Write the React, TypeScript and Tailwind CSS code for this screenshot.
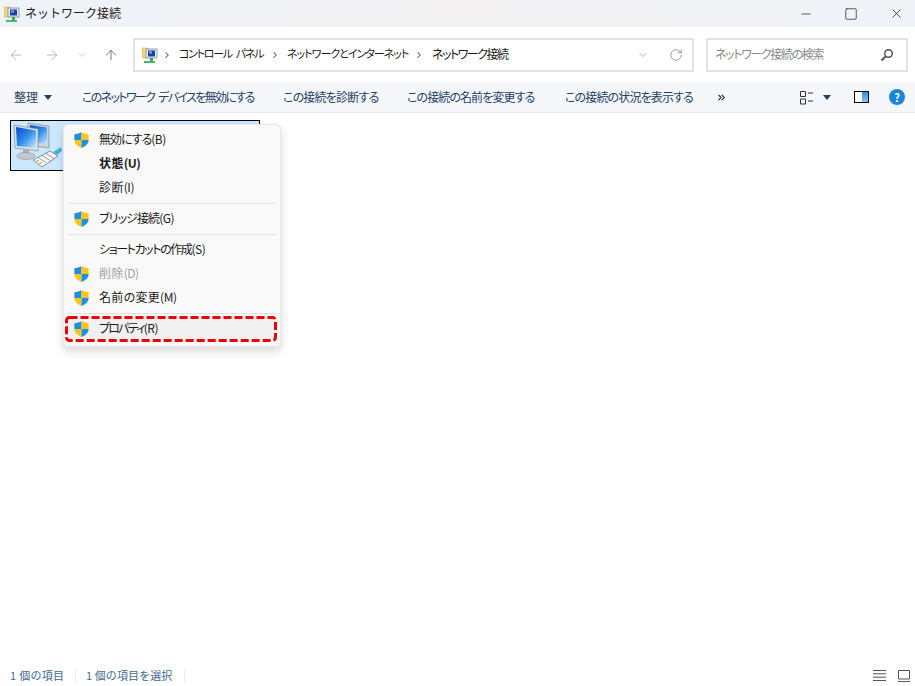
import { ArrowLeft, ArrowRight, ArrowUp, ChevronDown, ChevronRight, ChevronsRight, Minus, RotateCw, Square, X } from 'lucide-react';

const font = 'font-["Noto_Sans_CJK_JP","Liberation_Sans",sans-serif]';
const palt = '[font-feature-settings:"palt"]';

function FolderNetIcon() {
  return (
    <svg width="16" height="16" viewBox="0 0 16 16">
      <path d="M0 1h6l1 1v9H0z" fill="#f3d675" stroke="#c9a63c" strokeWidth="0.5" />
      <rect x="4" y="2" width="11" height="9" fill="#e8ecf4" stroke="#6f7f9c" strokeWidth="0.7" />
      <rect x="6" y="3.5" width="7" height="6" fill="#1c3fa8" />
      <rect x="7" y="4.5" width="3" height="2" fill="#7fb0ee" />
      <rect x="8" y="11" width="3" height="3" fill="#35a853" />
      <rect x="2" y="14" width="11" height="2" fill="#46b96a" />
    </svg>
  );
}

function NetworkIcon() {
  return (
    <svg width="49" height="48" viewBox="0 0 49 48">
      <defs>
        <linearGradient id="scr" x1="0" y1="0" x2="1" y2="1">
          <stop offset="0" stopColor="#0548cc" />
          <stop offset="0.5" stopColor="#2f8fea" />
          <stop offset="1" stopColor="#cfeafb" />
        </linearGradient>
      </defs>
      <path d="M15 1L36 4V26L15 23z" fill="#cbd3db" stroke="#7f8b98" strokeWidth="0.7" />
      <path d="M17 3L34 5.500V22L17 20z" fill="url(#scr)" />
      <path d="M1 3L25 7V29L2 26z" fill="#dbe1e8" stroke="#7f8b98" strokeWidth="0.7" />
      <path d="M3 5L23 8.500V26L4 24z" fill="url(#scr)" />
      <path d="M10 27L16 28V32L10 31z" fill="#a9aeb3" />
      <ellipse cx="13" cy="34" rx="9" ry="3.500" fill="#c4c8cc" stroke="#8f9499" strokeWidth="0.6" />
      <path d="M20 38L37 29L45 34L29 45z" fill="#f4f5f6" stroke="#6c7379" strokeWidth="0.8" />
      <path d="M25 35.500L33 40.500M29 33.500L37 38.500M33 31.500L41 36.500" stroke="#7e858b" strokeWidth="0.8" />
      <path d="M23 39L25 38L26 39L24 40zM26 41L28 40L29 41L27 42z" fill="#c9a63c" />
      <path d="M40 30L48 25L49 29L44 33z" fill="#4fb0dc" />
    </svg>
  );
}

function Shield() {
  return (
    <svg width="15" height="16" viewBox="0 0 16 18" className="shrink-0">
      <path d="M8 0C6 1.500 3 2.500 0 2.500V9h8z" fill="#1d8fe0" />
      <path d="M8 0c2 1.500 5 2.500 8 2.500V9H8z" fill="#fcc419" />
      <path d="M0 9c0 4 3 7 8 9V9z" fill="#fcc419" />
      <path d="M16 9c0 4-3 7-8 9V9z" fill="#1d8fe0" />
    </svg>
  );
}

interface MenuRowProps {
  label: string;
  hotkey: string;
  track: string;
  shield?: boolean;
  bold?: boolean;
  disabled?: boolean;
}

function MenuRow({ label, hotkey, track, shield, bold, disabled }: MenuRowProps) {
  return (
    <div className={`flex h-6 items-center pl-[10px] text-[12px] ${palt} ${bold ? 'font-bold text-[#1a1a1a]' : disabled ? 'text-[#a0a0a0]' : 'text-[#1a1a1a]'}`}>
      <div className="w-[25px] shrink-0">{shield && <Shield />}</div>
      <span className="whitespace-nowrap pb-[2px]">
        <span className={track}>{label}</span>
        <span className="tracking-[-0.5px]">{hotkey}</span>
      </span>
    </div>
  );
}

function Separator() {
  return <div className="mx-[4px] my-[3px] h-px bg-[#e3e3e3]" />;
}

export default function App() {
  return (
    <div className={`flex h-[686px] w-[915px] flex-col overflow-hidden bg-white ${font}`}>
      {/* Title bar */}
      <div className="flex h-[27px] items-center bg-gradient-to-r from-[#eef3f9] via-[#f3f1f2] to-[#eff3f8] pl-1">
        <FolderNetIcon />
        <span className="ml-[5px] pb-[1px] text-[12px] text-[#1a1a1a]">ネットワーク接続</span>
        <div className="ml-auto flex items-center gap-[31px] pr-[11px] text-[#1a1a1a]">
          <Minus size={14} strokeWidth={1.2} />
          <Square size={14} strokeWidth={1.2} />
          <X size={15} strokeWidth={1.2} />
        </div>
      </div>

      {/* Nav row */}
      <div className="flex h-[55px] items-center">
        <div className="flex w-[133px] items-center text-[#a8a8a8]">
          <ArrowLeft size={16} strokeWidth={1.2} className="ml-[8px]" />
          <ArrowRight size={16} strokeWidth={1.2} className="ml-[20px]" />
          <ChevronDown size={12} strokeWidth={1.2} className="ml-[16px]" />
          <ArrowUp size={16} strokeWidth={1.2} className="ml-[15px] text-[#555555]" />
        </div>
        <div className={`flex h-[34px] w-[561px] items-center whitespace-nowrap border-2 border-[#e2e2e2] pl-[7px] text-[11px] text-[#1a1a1a] ${palt}`}>
          <FolderNetIcon />
          <ChevronRight size={10} strokeWidth={2.5} className="ml-[4px] text-[#555555]" />
          <span className="ml-[7px] w-[84px] pb-[2px] tracking-[-1.3px] [word-spacing:3px]">コントロール パネル</span>
          <ChevronRight size={10} strokeWidth={2.5} className="ml-[7px] text-[#555555]" />
          <span className="ml-[7px] w-[121px] pb-[2px] tracking-[-1px]">ネットワークとインターネット</span>
          <ChevronRight size={10} strokeWidth={2.5} className="ml-[6px] text-[#555555]" />
          <span className="ml-[8px] pb-[2px] text-[12px] tracking-[-1.5px]">ネットワーク接続</span>
          <ChevronDown size={12} strokeWidth={1.2} className="ml-auto text-[#777777]" />
          <RotateCw size={14} strokeWidth={1.2} className="ml-[20px] mr-[9px] text-[#777777]" />
        </div>
        <div className={`ml-[12px] flex h-[34px] w-[202px] items-center border-2 border-[#e2e2e2] pl-[7px] text-[12px] text-[#8a8a8a] ${palt}`}>
          <span className="pb-[2px] tracking-[-1.35px]">ネットワーク接続の検索</span>
          <svg width="14" height="14" viewBox="0 0 14 14" className="ml-auto mr-[12px]">
            <circle cx="8.500" cy="5.500" r="3.800" fill="none" stroke="#555555" strokeWidth="1.500" />
            <path d="M5.500 8.500L1.500 12.500" stroke="#555555" strokeWidth="2" />
          </svg>
        </div>
      </div>

      {/* Toolbar */}
      <div className={`flex h-[31px] items-center whitespace-nowrap border-b border-[#e6e8eb] bg-[#f5f7fa] text-[12px] text-[#1f3f66] ${palt}`}>
        <span className="ml-[14px] w-[24px]">整理</span>
        <svg width="8" height="5" viewBox="0 0 8 5" className="ml-[6px] shrink-0"><path d="M0 0h8L4 5z" fill="#1f3f66" /></svg>
        <span className="ml-[30px] w-[172px] tracking-[-1.65px] [word-spacing:3px]">このネットワーク デバイスを無効にする</span>
        <span className="ml-[29px] w-[95px] tracking-[-0.8px]">この接続を診断する</span>
        <span className="ml-[29px] w-[129px] tracking-[-0.9px]">この接続の名前を変更する</span>
        <span className="ml-[29px] w-[129px] tracking-[-0.85px]">この接続の状況を表示する</span>
        <ChevronsRight size={11} strokeWidth={2.5} className="ml-[22px] shrink-0 text-[#14305a]" />
        <div className="ml-auto flex items-center pr-[10px]">
          <svg width="15" height="15" viewBox="0 0 15 15" className="shrink-0">
            <path d="M1.500 1.500h5v5h-5zM1.500 9h5v5h-5z" fill="none" stroke="#333333" />
            <path d="M9 3h5M9 11h5" stroke="#333333" />
          </svg>
          <svg width="8" height="5" viewBox="0 0 8 5" className="ml-[9px] shrink-0"><path d="M0 0h8L4 5z" fill="#1f3f66" /></svg>
          <div className="ml-[23px] flex h-[12px] w-[15px] border border-black">
            <div className="w-1/2 bg-white" />
            <div className="w-1/2 bg-gradient-to-b from-[#2a8fe0] to-[#7cc4f5]" />
          </div>
          <div className="ml-[20px] flex h-4 w-4 items-center justify-center rounded-full bg-[#1a86d8] text-[11px] font-bold text-white">?</div>
        </div>
      </div>

      {/* Content */}
      <div className="relative flex-1 px-[10px] pt-[7px]">
        <div className="flex h-[51px] w-[250px] items-center border border-black bg-[#cce8ff] pl-[2px]">
          <NetworkIcon />
        </div>

        {/* Context menu */}
        <div className="absolute left-[63px] top-[11px] w-[218px] rounded-[5px] border border-[#e8e8e8] bg-[#f9f9f9] pb-[5px] pt-[3px] shadow-[0_4px_10px_rgba(0,0,0,0.16)]">
          <MenuRow label="無効にする" hotkey="(B)" track="tracking-[-1px]" shield />
          <MenuRow label="状態" hotkey="(U)" track="tracking-[0.4px]" bold />
          <MenuRow label="診断" hotkey="(I)" track="tracking-[0.4px]" />
          <Separator />
          <MenuRow label="ブリッジ接続" hotkey="(G)" track="tracking-[-0.9px]" shield />
          <Separator />
          <MenuRow label="ショートカットの作成" hotkey="(S)" track="tracking-[-1.4px]" />
          <MenuRow label="削除" hotkey="(D)" track="tracking-[0.4px]" shield disabled />
          <MenuRow label="名前の変更" hotkey="(M)" track="tracking-[0.3px]" shield />
          <Separator />
          <div className="relative mx-[2px] bg-[#f0f0f0]">
            <div className="-ml-[2px]">
              <MenuRow label="プロパティ" hotkey="(R)" track="tracking-[-1.75px]" shield />
            </div>
            <svg width="212" height="26" viewBox="0 0 212 26" className="absolute -left-px -top-px">
              <rect x="1.500" y="1.500" width="209" height="23" rx="3" fill="none" stroke="#f00000" strokeWidth="3" strokeDasharray="8 3" />
            </svg>
          </div>
        </div>
      </div>

      {/* Status bar */}
      <div className="flex h-[21px] items-center whitespace-nowrap text-[11px] text-[#3f6a8f]">
        <span className="ml-[10px] w-[54px] tracking-[0.3px]">1 個の項目</span>
        <div className="ml-[11px] h-[14px] w-px bg-[#ececec]" />
        <span className="ml-[10px] w-[87px] tracking-[0.1px]">1 個の項目を選択</span>
        <div className="ml-[11px] h-[14px] w-px bg-[#ececec]" />
        <div className="ml-auto flex items-center gap-[12px] pr-[5px]">
          <svg width="13" height="11" viewBox="0 0 13 11"><path d="M0 .500h13M0 3.800h13M0 7.200h13M0 10.500h13" stroke="#555555" /></svg>
          <svg width="12" height="12" viewBox="0 0 12 12"><path d="M.500.500h11v8.500h-11z" fill="none" stroke="#555555" /><path d="M0 11.500h12" stroke="#555555" /></svg>
        </div>
      </div>
    </div>
  );
}
